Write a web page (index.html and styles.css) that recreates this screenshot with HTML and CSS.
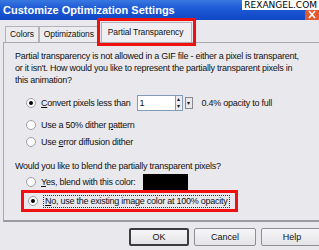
FILE: index.html
```html
<!DOCTYPE html>
<html lang="en">
<head>
    <meta charset="UTF-8">
    <title>Customize Optimization Settings</title>
    <link rel="stylesheet" href="styles.css">
</head>
<body>
    <div class="window">
        <div class="titlebar">
            <span class="title">Customize Optimization Settings</span>
            <span class="watermark">REXANGEL.COM</span>
            <span class="close">
                <svg width="14" height="10" viewBox="0 0 14 10">
                    <path d="M4 1 L10 8 M10 1 L4 8" stroke="#fff" stroke-width="1.6" fill="none"/>
                </svg>
            </span>
        </div>

        <div class="tabs">
            <div class="tab">Colors</div>
            <div class="tab">Optimizations</div>
            <div class="tab active">Partial Transparency</div>
        </div>

        <div class="panel">
            <p class="intro">Partial transparency is not allowed in a GIF file - either a pixel is transparent, or it isn't. How would you like to represent the partially transparent pixels in this animation?</p>

            <div class="option row-convert">
                <span class="radio checked"></span>
                <span><u>C</u>onvert pixels less than</span>
                <span class="spin">
                    <span class="spin-field">1</span>
                    <span class="spin-btns"><i>&#9652;</i><i>&#9662;</i></span>
                    <span class="spin-drop">&#9662;</span>
                </span>
                <span class="after">0.4% opacity to full</span>
            </div>

            <div class="option row-dither">
                <span class="radio"></span>
                <span>Use a 50% dither <u>p</u>attern</span>
            </div>

            <div class="option row-error">
                <span class="radio"></span>
                <span>Use <u>e</u>rror diffusion dither</span>
            </div>

            <p class="question">Would you like to blend the partially transparent pixels?</p>

            <div class="option row-yes">
                <span class="radio"></span>
                <span><u>Y</u>es, blend with this color:</span>
                <span class="swatch"></span>
            </div>

            <div class="option row-no">
                <span class="radio checked"></span>
                <span class="focus"><u>N</u>o, use the existing image color at 100% opacity</span>
            </div>
        </div>

        <div class="buttons">
            <button class="btn default">OK</button>
            <button class="btn">Cancel</button>
            <button class="btn">Help</button>
        </div>
    </div>
</body>
</html>
```

FILE: styles.css
```css
* {
    margin: 0;
    padding: 0;
    box-sizing: border-box;
}

body {
    width: 319px;
    height: 250px;
    overflow: hidden;
    background: #e9e8ec;
    font-family: "Liberation Sans", Arial, sans-serif;
    font-size: 9px;
    letter-spacing: -0.25px;
    color: #111;
}

.window {
    width: 319px;
    height: 250px;
}

.titlebar {
    position: relative;
    height: 20px;
    background: linear-gradient(#3a78e0, #1f5bd6 40%, #0f46c4);
    color: #fff;
    font-size: 11px;
    font-weight: bold;
    letter-spacing: 0;
    line-height: 20px;
    padding-left: 3px;
}

.watermark {
    position: absolute;
    top: 0;
    right: 0;
    height: 10px;
    padding: 0 2px;
    background: #fff;
    color: #000;
    font-family: "DejaVu Sans", sans-serif;
    font-size: 9px;
    font-weight: normal;
    line-height: 10px;
}

.close {
    position: absolute;
    right: 0;
    top: 10px;
    width: 14px;
    height: 10px;
    background: #e2582f;
    border-radius: 2px 0 0 0;
    display: flex;
}

.tabs {
    display: flex;
    align-items: flex-end;
    height: 22px;
    padding-left: 5px;
    font-size: 8.5px;
    letter-spacing: -0.12px;
}

.tab {
    height: 16px;
    padding: 0 4px;
    border: 1px solid #b4b4b8;
    border-bottom: none;
    line-height: 14px;
    background: #ecebef;
}

.tab.active {
    height: 20px;
    margin-left: 2px;
    padding: 0 8px 0 6px;
    line-height: 18px;
    background: #efeef2;
    outline: 3px solid #f01010;
    outline-offset: 1px;
    position: relative;
    z-index: 1;
}

.panel {
    width: 330px;
    height: 180px;
    margin-left: 3px;
    border: 1px solid #a9a9ae;
    border-right: none;
    border-bottom: 2px solid #9a9aa0;
    padding: 7px 0 0 11px;
}

.intro {
    width: 288px;
    line-height: 12px;
}

.option {
    display: flex;
    align-items: center;
    padding-left: 11px;
    height: 12px;
    white-space: nowrap;
}

.radio {
    width: 10px;
    height: 10px;
    border: 1px solid #9aa0a8;
    border-radius: 50%;
    background: #fff;
    margin-right: 5px;
    position: relative;
    flex-shrink: 0;
}

.radio.checked::after {
    content: "";
    position: absolute;
    left: 2px;
    top: 2px;
    width: 4px;
    height: 4px;
    border-radius: 50%;
    background: #000;
}

.row-convert {
    margin-top: 9px;
    height: 16px;
}

.spin {
    display: flex;
    margin-left: 6px;
    height: 16px;
}

.spin-field {
    width: 38px;
    height: 16px;
    background: #fff;
    border: 1px solid #7f9db9;
    border-right: none;
    padding-left: 2px;
    line-height: 14px;
}

.spin-btns {
    display: flex;
    flex-direction: column;
    width: 8px;
    height: 16px;
    border: 1px solid #7f9db9;
    background: #ecebef;
}

.spin-btns i {
    flex: 1;
    font-style: normal;
    font-size: 6px;
    line-height: 7px;
    text-align: center;
}

.spin-drop {
    width: 8px;
    height: 12px;
    margin: 2px 0 0 2px;
    border: 1px solid #8a8a8e;
    font-size: 6px;
    line-height: 10px;
    text-align: center;
}

.after {
    margin-left: 9px;
}

.row-dither {
    margin-top: 8px;
}

.row-error {
    margin-top: 5px;
}

.question {
    margin-top: 12px;
    line-height: 12px;
}

.row-yes {
    margin-top: 4px;
}

.swatch {
    width: 45px;
    height: 16px;
    margin-left: 8px;
    background: #000;
}

.row-no {
    width: 217px;
    height: 22px;
    margin: 2px 0 0 6px;
    padding-left: 4px;
    border: 3px solid #f01010;
}

.focus {
    border: 1px dotted #333;
    padding: 0 1px;
    line-height: 11px;
}

.buttons {
    display: flex;
    gap: 5px;
    padding: 6px 0 0 129px;
}

.btn {
    width: 62px;
    height: 18px;
    background: linear-gradient(#f6f6f8, #e4e4e8);
    border: 1px solid #8e8e94;
    border-radius: 2px;
    font-family: "Liberation Sans", Arial, sans-serif;
    font-size: 9px;
    color: #111;
    flex-shrink: 0;
}

.btn.default {
    width: 60px;
    border: 2px solid #3c3c40;
}
```
